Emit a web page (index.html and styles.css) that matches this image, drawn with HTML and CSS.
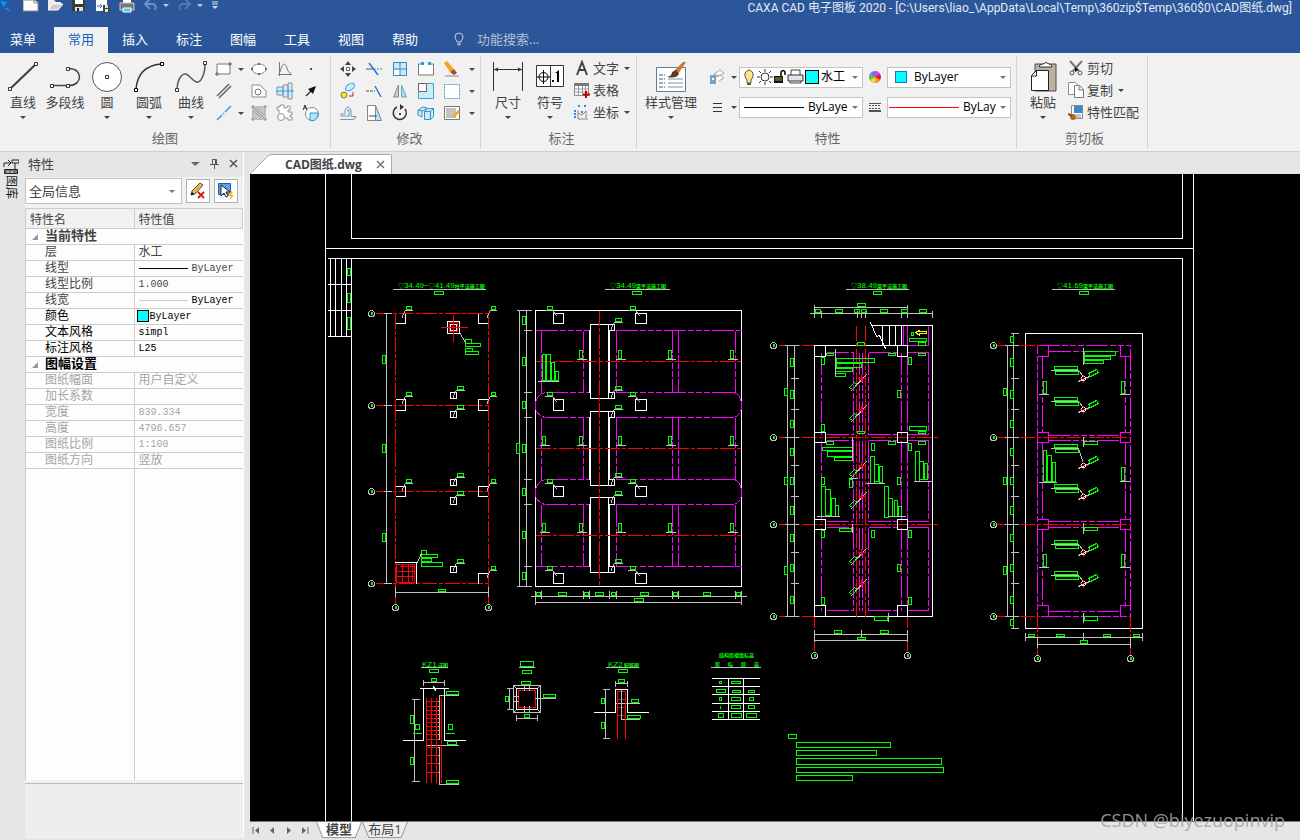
FILE: index.html
```
<!DOCTYPE html>
<html lang="zh-CN">

<head>
  <meta charset="UTF-8">
  <meta name="viewport" content="width=device-width,initial-scale=1.0">
  <title>CAXA CAD 电子图板 2020</title>
  <link rel="stylesheet" href="styles.css">
</head>

<body>
  <header class="titlebar">
    <div class="quick">
      <svg class="logo" width="12" height="13"><path d="M0 0l8 2-5 6zM5 0l6 4M2 7l7 1 2 4M0 8v3" fill="#1b8fe8" stroke="#0a5fc0"/></svg>
      <button aria-label="新建"><svg width="16" height="13"><path d="M0 0h11l4 2v9H0z" fill="#fff" stroke="#8a8a8a"/><path d="M11 0v3h4" fill="none" stroke="#8a8a8a"/></svg></button>
      <button aria-label="打开"><svg width="16" height="13"><path d="M1 0h6l2 2h5v3L12 9H1z" fill="#ececec"/><path d="M5 4h11l-5 6H1z" fill="#d0cdc8" stroke="#fff"/></svg></button>
      <button aria-label="保存"><svg width="16" height="13"><path d="M1 0h13v11H1z" fill="#3c3c3c"/><path d="M4 0h8v4H4z" fill="#fff"/><path d="M4 7h8v4H4z" fill="#ddd"/><path d="M6 8h2v3H6z" fill="#222"/></svg></button>
      <button aria-label="另存为"><svg width="16" height="13"><path d="M1 0h11v11H1z" fill="#fff"/><path d="M2 6h5m-2-2l2 2-2 2" fill="none" stroke="#2b79c8"/><path d="M8 5h7v7H8z" fill="#444"/><path d="M10 5h3v3h-3zM10 9h3v3h-3z" fill="#ddd"/></svg></button>
      <button aria-label="打印"><svg width="16" height="13"><path d="M4 0h8v4H4z" fill="#fff"/><path d="M1 3h14v7H1z" fill="#777" stroke="#ccc"/><path d="M4 8h8v4H4z" fill="#43cfee" stroke="#fff"/></svg></button>
      <button aria-label="撤销"><svg width="16" height="13"><path d="M6 0L2 4l5 5M3 4h7q4 1 2 6" fill="none" stroke="#6f8fc4" stroke-width="2"/></svg></button>
      <i class="caret light"></i>
      <button aria-label="重做"><svg width="16" height="13"><path d="M9 0l4 4-5 5M12 4H6q-5 1-3 6" fill="none" stroke="#5577b3" stroke-width="2"/></svg></button>
      <i class="caret light"></i>
      <button aria-label="自定义"><svg width="8" height="10"><path d="M1 2h6M1 4h6" stroke="#d5ddec"/><path d="M1 6h6L4 9z" fill="#d5ddec"/></svg></button>
    </div>
    <h1>CAXA CAD 电子图板 2020 - [C:\Users\liao_\AppData\Local\Temp\360zip$Temp\360$0\CAD图纸.dwg]</h1>
  </header>

  <nav class="menu">
    <button class="file">菜单</button>
    <button class="active">常用</button>
    <button>插入</button>
    <button>标注</button>
    <button>图幅</button>
    <button>工具</button>
    <button>视图</button>
    <button>帮助</button>
    <label class="search">
      <svg width="10" height="14"><path d="M3 9Q1 7 1 5a4 4 0 018 0q0 2-2 4v1H3zM3 12h4M4 13h2" fill="none" stroke="#c3cee2"/></svg>
      <input type="text" placeholder="功能搜索..." aria-label="功能搜索">
    </label>
  </nav>

  <div class="ribbon">
    <section class="group draw-group">
      <div class="tools">
        <button class="big"><svg width="32" height="32"><path d="M3 28L29 3" stroke="#3c3c44" stroke-width="2"/><path d="M1.500 26.500h3v3h-3zM27.500 1.500h3v3h-3z" fill="#fff" stroke="#333"/></svg>直线<i class="caret"></i></button>
        <button class="big"><svg width="32" height="32"><path d="M2 24.500h18c14 0 14-17 0-17h-2" fill="none" stroke="#444" stroke-width="1.500"/><path d="M1.500 23.500h3v3h-3zM17.500 23.500h3v3h-3zM17.500 6.500h3v3h-3z" fill="#fff" stroke="#333"/></svg>多段线<i class="caret blank"></i></button>
        <button class="big"><svg width="32" height="32"><circle cx="16" cy="16" r="14.500" fill="#fff" stroke="#555"/><path d="M14.500 14.500h3v3h-3z" fill="#fff" stroke="#333"/></svg>圆<i class="caret"></i></button>
        <button class="big"><svg width="32" height="32"><path d="M3 28Q5 5 28 3" fill="none" stroke="#333" stroke-width="1.500"/><path d="M1.500 27.500h3v3h-3zM27.500 1.500h3v3h-3z" fill="#fff" stroke="#000"/></svg>圆弧<i class="caret"></i></button>
        <button class="big"><svg width="32" height="32"><path d="M2 28C3 15 9 10 14 15s9 10 13 2q3-6 3-14" fill="none" stroke="#555" stroke-width="1.500"/><path d="M.5 27.500h3v3h-3zM28.500 .5h3v3h-3z" fill="#fff" stroke="#333"/></svg>曲线<i class="caret"></i></button>
        <div class="grid draw">
          <button aria-label="矩形"><svg width="18" height="18"><path d="M2 4h13v10H2z" fill="#fff" stroke="#777"/><path d="M1 13h2v2H1zM14 3h2v2h-2z" fill="#fff" stroke="#555"/></svg><i class="caret"></i></button>
          <button aria-label="椭圆"><svg width="18" height="18"><ellipse cx="9" cy="9" rx="7" ry="5" fill="#fff" stroke="#888"/><path d="M1 8h2v2H1zM15 8h2v2h-2zM8 3h2v2H8zM8 13h2v2H8z" fill="#666"/></svg></button>
          <button aria-label="公式曲线"><svg width="18" height="18"><path d="M3.500 2v14M2 14.500h14" stroke="#777"/><path d="M4 12c2-9 5-10 7-4s3 5 4 5" fill="none" stroke="#777"/></svg></button>
          <button aria-label="点"><svg width="18" height="18"><path d="M8 8h2v2H8z" fill="#555"/></svg></button>
          <button aria-label="平行线"><svg width="18" height="18"><path d="M2 14L14 2M4 16L16 4" stroke="#666" stroke-width="1.500"/></svg></button>
          <button aria-label="孔"><svg width="18" height="18"><path d="M2 15V3h8l6 6v6z" fill="#fff" stroke="#888"/><circle cx="8" cy="10" r="3" fill="none" stroke="#777"/></svg></button>
          <button aria-label="轴"><svg width="18" height="18"><path d="M1 5h6v8H1zM7 3h5v12H7zM12 1h4v16h-4z" fill="#d4e9f8" stroke="#8296a6"/><path d="M0 9h18" stroke="#2b9de0"/></svg></button>
          <button aria-label="箭头"><svg width="18" height="18"><path d="M4 14l6-6" stroke="#333" stroke-width="1.500"/><path d="M14 4l-3 8-5-5z" fill="#111"/></svg></button>
          <button aria-label="中心线"><svg width="18" height="18"><path d="M2 16l5-5m1-1l1-1m1-1l6-6" stroke="#2ba7df" stroke-width="1.500"/></svg><i class="caret"></i></button>
          <button aria-label="填充"><svg width="18" height="18"><path d="M3 1v16M15 1v16M1 3h16M1 15h16" stroke="#888"/><path d="M4 4h10v10H4z" fill="#c6c9ca"/><path d="M4 7l7 7M4 4l10 10M7 4l7 7" stroke="#999"/></svg></button>
          <button aria-label="齿轮"><svg width="18" height="18"><path d="M3 9V6H1V3h3V1h4v3h3V2h3v4h-2v2h4v3h-2v2h2v3h-4v-2h-3" fill="#fff" stroke="#8794a0"/><circle cx="5" cy="13" r="3.500" fill="#fff" stroke="#8794a0"/></svg></button>
          <button aria-label="局部放大"><svg width="18" height="18"><circle cx="10" cy="10" r="6.500" fill="#fff" stroke="#888"/><path d="M8 9h8v3q-2 5-6 5l-2-1z" fill="#b5e2f8" stroke="#2c95cf"/><path d="M1 6l2-5 2 5M2 4h3" fill="none" stroke="#333"/></svg></button>
        </div>
      </div>
      <h2>绘图</h2>
    </section>

    <section class="group edit-group">
      <div class="tools">
        <div class="grid edit">
          <button aria-label="平移"><svg width="18" height="18"><path d="M9 1l3 4H6zM9 17l3-4H6zM1 9l4-3v6zM17 9l-4-3v6z" fill="#444"/><path d="M7.500 7.500h3v3h-3z" fill="#fff" stroke="#666"/></svg></button>
          <button aria-label="裁剪"><svg width="18" height="18"><path d="M1 9h7" stroke="#555"/><path d="M4 3l9 12" stroke="#2b79c8" stroke-width="1.500"/><path d="M9 9h8" stroke="#2b9de0" stroke-dasharray="2 1"/></svg></button>
          <button aria-label="阵列"><svg width="18" height="18"><path d="M2.500 2.500h13v13h-13z" fill="#c9ebfb" stroke="#3a87b8"/><path d="M3 10h6v5H3z" fill="#fff"/><path d="M9 2v14M2 9h14" stroke="#3a87b8"/></svg></button>
          <button aria-label="打断"><svg width="18" height="18"><path d="M5 4H1.500v11h15V4H13" fill="#fff" stroke="#777"/><path d="M4 2h3v3H4zM11 2h3v3h-3z" fill="#2b9de0"/></svg></button>
          <button aria-label="删除"><svg width="18" height="18"><path d="M1 3l3-2 7 8-4 3z" fill="#f5a516"/><path d="M7 12l4-3 3 4-3 2z" fill="#a44d28"/><path d="M2 16h14" stroke="#888"/></svg></button><i class="caret"></i>
          <button aria-label="复制对象"><svg width="18" height="18"><ellipse cx="11" cy="5" rx="5" ry="3" transform="rotate(-35 11 5)" fill="#c9ebfb" stroke="#2b9de0"/><circle cx="5" cy="13" r="3" fill="#ffe800" stroke="#777"/><path d="M10 14h4v-4" fill="none" stroke="#a22"/></svg></button>
          <button aria-label="延伸"><svg width="18" height="18"><path d="M1 9h9" stroke="#555" stroke-dasharray="3 1"/><path d="M10 4l6 11" stroke="#2b79c8" stroke-width="1.500"/></svg></button>
          <button aria-label="镜像"><svg width="18" height="18"><path d="M7.500 3v12h-5z" fill="#ccc" stroke="#888"/><path d="M10.500 3v12h5z" fill="#a9dcf6" stroke="#6aa"/></svg></button>
          <button aria-label="缩放"><svg width="18" height="18"><path d="M1.500 1.500h15v15h-15z" fill="#c9ebfb" stroke="#4aa0cc"/><path d="M1.500 1.500h8v8h-8z" fill="#fff" stroke="#666"/></svg></button>
          <button aria-label="拉伸"><svg width="18" height="18"><path d="M1.500 2.500h15v14h-15z" fill="#fff" stroke="#4f9fc6" stroke-dasharray="2 1"/></svg></button><i class="caret"></i>
          <button aria-label="偏移"><svg width="18" height="18"><path d="M1 15.500h12q4 0 4-3h-5V6q-3-6-6 0v4H2v2h8V7q-1-3-2 0" fill="none" stroke="#6d9bb8"/></svg></button>
          <button aria-label="倒角"><svg width="18" height="18"><path d="M2.500 1.500h8l6 15h-14z" fill="#b7e4fa" stroke="#5b8ca8"/><path d="M2.500 1.500h8v15h-8z" fill="#fff" stroke="#888"/><path d="M4 12h8" stroke="#444"/></svg></button>
          <button aria-label="旋转"><svg width="18" height="18"><path d="M6 3a6.500 6.500 0 108 2" fill="none" stroke="#333" stroke-width="1.500"/><path d="M9 0v6l4-3z" fill="#333"/><path d="M8 9h2v2H8z" fill="#444"/></svg></button>
          <button aria-label="分解"><svg width="18" height="18"><path d="M7.500 7.500h6v8h-6zM7.500 7.500l3-3h6v8l-3 3M13.500 7.500l3-3M1 6l5-3 4 1-4 3zM1 6v5l4 2V7" fill="#c9ebfb" stroke="#3e91bf"/></svg></button>
          <button aria-label="编辑填充"><svg width="18" height="18"><path d="M1.500 2.500h15v13h-15z" fill="#fff" stroke="#777"/><path d="M3 4h10v10H3z" fill="#c2c2c2"/><path d="M9 13l6-7 2 2-6 6z" fill="#f5a516"/></svg></button><i class="caret"></i>
        </div>
      </div>
      <h2>修改</h2>
    </section>

    <section class="group note-group">
      <div class="tools">
        <button class="big"><svg width="32" height="32"><path d="M1.500 1v29M30.500 1v29M2 8.500h28" stroke="#2f3338"/><path d="M2 8.500l4-2v4zM30 8.500l-4-2v4z" fill="#333"/></svg>尺寸<i class="caret"></i></button>
        <button class="big"><svg width="32" height="32"><path d="M2.500 4.500h27v21h-27zM16.500 4v22" fill="#fff" stroke="#333"/><circle cx="9.500" cy="16" r="4.500" fill="none" stroke="#000"/><path d="M3 16h13M9.500 9v14" stroke="#000"/><path d="M18 19h2v2h-2zM21 12l4-3v12h-2v-9z"/></svg>符号<i class="caret"></i></button>
        <div class="rows">
          <button><svg width="16" height="16"><path d="M3 15L8 2l5 13M5 10h7" fill="none" stroke="#444" stroke-width="2"/></svg>文字<i class="caret"></i></button>
          <button><svg width="16" height="16"><path d="M.5 1.500h14v12H.5z" fill="#fff" stroke="#888"/><path d="M0 1h15v3H0z" fill="#777"/><path d="M1 7h13M1 10h13M4.500 4v9M8.500 4v9M11.500 4v9" stroke="#999"/><path d="M12 9v7M9 12.500h7" stroke="#c00000" stroke-width="2"/></svg>表格</button>
          <button><svg width="16" height="16"><path d="M4 6v9h10M4 9l4 2 4-4v7" fill="none" stroke="#888"/><path d="M1 6v8M5 1v3M11 1v3M8 7v2" stroke="#3a87d0" stroke-dasharray="2 1" stroke-width="2"/></svg>坐标<i class="caret"></i></button>
        </div>
      </div>
      <h2>标注</h2>
    </section>

    <section class="group prop-group">
      <div class="tools">
        <button class="big wide"><svg width="32" height="32"><path d="M1.500 6.500h29v24h-29z" fill="#fff" stroke="#5b7f9b"/><path d="M4 14h6M4 18h6M4 22h6M4 26h6" stroke="#555" stroke-dasharray="4 1"/><path d="M13 18h15M13 22h15M13 26h15" stroke="#6f95b5"/><path d="M28 1h3l-8 12-4-3z" fill="#c9782e"/><path d="M21 9l3 4q-3 5-12 3 5-1 5-5z" fill="#5f3a24"/></svg>样式管理<i class="caret"></i></button>
        <div class="layers">
          <button aria-label="图层"><svg width="16" height="16"><path d="M5 5l6-4 4 3-5 3zM6 9l5-3 4 3-5 3" fill="#fff" stroke="#9aa3aa"/><path d="M1 6h6v9H1z" fill="#7da0bd"/><path d="M3 9h2v2H3z" fill="#fff"/></svg><i class="caret"></i></button>
          <div class="combo">
            <svg width="14" height="20"><path d="M4 13Q1 10 2 6q4-6 8 0 1 4-2 7v3H4z" fill="#ffe58a" stroke="#555"/><path d="M4 16h4v2H4z" fill="#555"/></svg>
            <svg width="16" height="20"><circle cx="8" cy="10" r="4" fill="#fff" stroke="#333"/><path d="M8 2v3M8 15v3M0 10h3M13 10h3M2 4l2 2M12 14l2 2M2 16l2-2M12 6l2-2" stroke="#333"/></svg>
            <svg width="14" height="20"><path d="M8 9V5q2-3 4 0v3" fill="none" stroke="#000" stroke-width="1.500"/><path d="M1 9h9v7H1z" fill="#111"/><path d="M2 11h7M2 13h7" stroke="#bba02c"/></svg>
            <svg width="18" height="20"><path d="M4 8V3h9v5M3 12v4h11v-4" fill="#fff" stroke="#444"/><path d="M1 8h15v6H1z" fill="#dce4ee" stroke="#333"/></svg>
            <i class="swatch"></i>
            <select aria-label="图层选择"><option>水工</option></select><i class="caret soft"></i>
          </div>
          <button aria-label="颜色"><svg width="14" height="14"><circle cx="7" cy="7" r="6" fill="#7a6cf0"/><path d="M7 7V1a6 6 0 015 3z" fill="#c04df0"/><path d="M7 7l5-3a6 6 0 010 6z" fill="#f01818"/><path d="M7 7l5 3a6 6 0 01-5 3z" fill="#ff9a1c"/><path d="M7 7v6a6 6 0 01-5-3z" fill="#ffe11c"/><path d="M7 7l-5 3a6 6 0 010-6z" fill="#4ccf3f"/></svg></button>
          <div class="combo color">
            <i class="swatch blue"></i>
            <select aria-label="颜色选择"><option>ByLayer</option></select><i class="caret soft"></i>
          </div>
          <button aria-label="线型"><svg width="16" height="16"><path d="M4 4h9M4 8h9M4 12h9" stroke="#333" shape-rendering="crispEdges"/></svg><i class="caret"></i></button>
          <div class="combo">
            <i class="stroke"></i>
            <select aria-label="线型选择"><option>ByLayer</option></select><i class="caret soft"></i>
          </div>
          <button aria-label="线宽"><svg width="14" height="14" shape-rendering="crispEdges"><path d="M1 3h12" stroke="#555"/><path d="M1 5h12M1 8h12" stroke="#555" stroke-dasharray="2 1"/><path d="M1 11h12" stroke="#555" stroke-width="2"/></svg></button>
          <div class="combo">
            <i class="stroke red-line"></i>
            <select aria-label="线宽选择"><option>ByLayer</option></select><i class="caret soft"></i>
          </div>
        </div>
      </div>
      <h2>特性</h2>
    </section>

    <section class="group clip-group">
      <div class="tools">
        <button class="big"><svg width="32" height="32"><path d="M8 3h21v27H8z" fill="#beb1a0" stroke="#4a4a4a"/><path d="M12 6q0-3 4-3 3-3 6 0 3 0 3 3z" fill="#fff" stroke="#333"/><path d="M9.500 9.500h12v20h-17v-15z" fill="#fff" stroke="#222"/><path d="M9.500 9v6h-5" fill="none" stroke="#222"/></svg>粘贴<i class="caret"></i></button>
        <div class="rows">
          <button><svg width="16" height="16"><path d="M2 1l9 10M14 1L5 11" stroke="#777" stroke-width="2"/><path d="M7 7l3 3-3 2z"/><circle cx="4" cy="13" r="2" fill="none" stroke="#555"/><circle cx="12" cy="13" r="2" fill="none" stroke="#555"/></svg>剪切</button>
          <button><svg width="16" height="16"><path d="M.5 .5h7l2 2v10h-9z" fill="#fff" stroke="#8a8f95"/><path d="M6.500 3.500h5l4 4v8h-9zM11 4v4h4" fill="#fff" stroke="#777"/></svg>复制<i class="caret"></i></button>
          <button><svg width="16" height="16"><path d="M3.500 1.500h11v13h-11z" fill="#fff" stroke="#889"/><path d="M6 2h8v7H6z" fill="#3f86c8"/><path d="M8 11h5M8 13h5" stroke="#889"/><circle cx="5" cy="13" r="3" fill="#b5651d"/><path d="M0 10l4 2" stroke="#8a4b12" stroke-width="2"/></svg>特性匹配</button>
        </div>
      </div>
      <h2>剪切板</h2>
    </section>
  </div>

  <main>
    <aside class="dock">
      <svg width="16" height="16"><path d="M1 8V4h6M5 1l3 3-3 3M9 1h7v3H9zM12 4v6" fill="none" stroke="#222"/><path d="M1.500 10.500h13v4h-13z" fill="#777" stroke="#222"/><path d="M4 13h2m2 0h2" stroke="#fff"/></svg>
      <button>图库</button>
    </aside>

    <aside class="panel">
      <div class="panel-title">
        <span>特性</span>
        <button aria-label="菜单"><svg width="11" height="11"><path d="M1 4h9L5 8z" fill="#666"/></svg></button>
        <button aria-label="固定"><svg width="11" height="11"><path d="M3.500 6V1.500h4V6M1 6.500h9M5.500 7v4M6.500 2v4" fill="none" stroke="#555"/></svg></button>
        <button aria-label="关闭"><svg width="11" height="11"><path d="M2 2l7 7M9 2L2 9" stroke="#555" stroke-width="1.500"/></svg></button>
      </div>
      <div class="panel-pick">
        <div class="combo">
          <select aria-label="对象"><option>全局信息</option></select><i class="caret soft"></i>
        </div>
        <button aria-label="清除选择"><svg width="18" height="18"><path d="M2 13l1-4 8-8 3 2-8 9z" fill="#f1b845" stroke="#444"/><path d="M2 13l1-3 2 2z"/><path d="M9 10l6 6M15 10l-6 6" stroke="#d0221c" stroke-width="2"/></svg></button>
        <button aria-label="快速选择"><svg width="18" height="18"><path d="M1.500 1.500h12v11h-12z" fill="#59a2e8" stroke="#1b62ac"/><path d="M4 3v11l3-3 2 4 2-1-2-4h4z" fill="#fff" stroke="#222"/><path d="M14 9l-3 5h3l-1 4 4-5h-3l2-3z" fill="#ffb400"/></svg></button>
      </div>
      <div class="prop-view">
        <table class="props">
          <thead>
            <tr><th scope="col">特性名</th><th scope="col">特性值</th></tr>
          </thead>
          <tbody>
            <tr class="cat"><th colspan="2">当前特性</th></tr>
            <tr><th>层</th><td class="cn">水工</td></tr>
            <tr><th>线型</th><td><i class="line"></i>ByLayer</td></tr>
            <tr><th>线型比例</th><td>1.000</td></tr>
            <tr><th>线宽</th><td class="on"><i class="line thin"></i>ByLayer</td></tr>
          </tbody>
          <tbody class="on">
            <tr><th>颜色</th><td class="has-swatch"><i class="swatch small"></i>ByLayer</td></tr>
            <tr><th>文本风格</th><td>simpl</td></tr>
            <tr><th>标注风格</th><td>L25</td></tr>
            <tr class="cat"><th colspan="2">图幅设置</th></tr>
          </tbody>
          <tbody class="off">
            <tr><th>图纸幅面</th><td class="cn">用户自定义</td></tr>
            <tr><th>加长系数</th><td></td></tr>
            <tr><th>宽度</th><td>839.334</td></tr>
            <tr><th>高度</th><td>4796.657</td></tr>
            <tr><th>图纸比例</th><td>1:100</td></tr>
            <tr><th>图纸方向</th><td class="cn">竖放</td></tr>
          </tbody>
        </table>
        <div class="prop-rest"><i></i></div>
      </div>
      <div class="prop-help"></div>
    </aside>

    <section class="document">
      <div class="doc-tabs">
        <svg width="21" height="20"><path d="M0 20L19 1h2v19z" fill="#fff"/><path d="M0 20L19 1h2" fill="none" stroke="#aaa"/></svg>
        <div class="doc-tab">CAD图纸.dwg
          <button aria-label="关闭图纸"><svg width="9" height="9"><path d="M1 1l7 7M8 1L1 8" stroke="#777" stroke-width="1.500"/></svg></button>
        </div>
      </div>
      <svg class="sheet" role="img" aria-label="CAD图纸">
        <g id="drawing" transform="translate(-250 -174)">
          <g class="label">
            <text x="398" y="288"><tspan class="tri">▽</tspan>34.49~<tspan class="tri">▽</tspan>41.49<tspan class="han">柱平法施工图</tspan></text>
            <text x="610" y="288"><tspan class="tri">▽</tspan>34.49<tspan class="han">梁平法施工图</tspan></text>
            <text x="851" y="288"><tspan class="tri">▽</tspan>38.49<tspan class="han">梁平法施工图</tspan></text>
            <text x="1057" y="288"><tspan class="tri">▽</tspan>41.69<tspan class="han">梁平法施工图</tspan></text>
            <text x="422" y="667">KZ1<tspan class="han"> 详图</tspan></text>
            <text x="608" y="667">KZ2<tspan class="han"> 配筋图</tspan></text>
            <text class="han" x="719" y="657">结构层楼面标高</text>
            <text class="han" x="715" y="666">层</text><text class="han" x="728" y="666">标</text>
            <text class="han" x="741" y="666">层</text><text class="han" x="754" y="666">高</text>
          </g>
        </g>
      </svg>
      <div class="layout-tabs">
        <button aria-label="首个"><svg width="9" height="9"><path d="M1 1v7" stroke="#666"/><path d="M7 1v7L3 4.500z" fill="#666"/></svg></button>
        <button aria-label="上一个"><svg width="9" height="9"><path d="M6 1v7L2 4.500z" fill="#666"/></svg></button>
        <button aria-label="下一个"><svg width="9" height="9"><path d="M3 1v7l4-3.500z" fill="#666"/></svg></button>
        <button aria-label="末个"><svg width="9" height="9"><path d="M8 1v7" stroke="#666"/><path d="M2 1v7l4-3.500z" fill="#666"/></svg></button>
        <button class="layout current"><span>模型</span></button>
        <button class="layout"><span>布局1</span></button>
      </div>
    </section>
  </main>
  <div class="watermark">CSDN @biyezuopinvip</div>

  <script src="drawing.js"></script>
</body>

</html>
```

FILE: styles.css
```
* {
  box-sizing: border-box;
}

body {
  margin: 0;
  height: 100vh;
  overflow: hidden;
  display: flex;
  flex-direction: column;
  background: #e6e6e6;
  color: #444;
  font: 13px/16px "Open Sans", "Noto Sans CJK SC", sans-serif;
}

button,
select,
input {
  font: inherit;
  color: inherit;
  padding: 0;
  margin: 0;
  border: 0;
  background: none;
}

select {
  appearance: none;
  flex: 1;
  min-width: 0;
  height: 18px;
  color: #000;
}

h1,
h2 {
  margin: 0;
  font-weight: normal;
}

svg {
  display: block;
  flex: none;
}

/* drop-down arrow */
.caret {
  flex: none;
  width: 0;
  height: 0;
  border: 3px solid transparent;
  border-top-color: #444;
  border-bottom: 0;
}

.caret.light {
  border-top-color: #c3cee2;
}

.caret.soft {
  border-top-color: #777;
}

.caret.blank {
  visibility: hidden;
}

/* title bar */
.titlebar {
  display: flex;
  justify-content: space-between;
  height: 27px;
  padding-right: 8px;
  background: #2b579a;
  color: #e3eaf5;
}

.titlebar h1 {
  font: 12px/16px Roboto, "Noto Sans CJK SC", sans-serif;
  white-space: nowrap;
}

.quick {
  display: flex;
  align-items: flex-start;
  gap: 8px;
}

.quick .logo {
  margin-right: 3px;
}

.quick .caret {
  margin: 4px 0 0 -4px;
}

.menu {
  display: flex;
  height: 26px;
  background: #2b579a;
  color: #fff;
}

.menu button {
  width: 54px;
  padding-bottom: 2px;
}

.menu .file {
  width: 46px;
  margin-right: 8px;
}

.menu .active {
  background: #f1f1f1;
  color: #1a5dbe;
}

.search {
  display: flex;
  align-items: center;
  gap: 13px;
  margin-left: 22px;
  padding-bottom: 2px;
}

.search input {
  width: 140px;
}

.search input::placeholder {
  color: #b4c0d6;
  opacity: 1;
}

/* ribbon */
.ribbon {
  display: flex;
  height: 99px;
  padding-top: 3px;
  background: #f1f1f1;
  border-bottom: 1px solid #cfcfcf;
}

.group {
  height: 92px;
  padding-left: 2px;
  border-right: 1px solid #d4d4d4;
  display: flex;
  flex-direction: column;
}

.group h2 {
  font-size: 13px;
  text-align: center;
  color: #666;
}

.tools {
  display: flex;
  height: 74px;
}

.big {
  width: 42px;
  height: 66px;
  padding-top: 5px;
  display: flex;
  flex-direction: column;
  align-items: center;
  white-space: nowrap;
}

.big svg {
  margin-bottom: 1px;
}

.big .caret {
  margin-top: 6px;
}

.big.wide {
  width: 64px;
}

.grid {
  display: grid;
  grid-auto-rows: 22px;
  align-items: center;
  padding-top: 2px;
}

.grid button {
  display: flex;
  align-items: center;
  gap: 5px;
}

.draw {
  grid-template-columns: 35px repeat(3, 26px);
  margin-left: 3px;
}

.draw-group {
  padding-right: 2px;
}

.edit {
  grid-template-columns: repeat(5, 26px) 11px;
}

.edit-group {
  padding-left: 8px;
}

.note-group {
  padding-left: 6px;
}

.rows {
  display: grid;
  grid-auto-rows: 22px;
  padding-top: 1px;
  width: 65px;
  padding-left: 3px;
}

.rows button {
  display: flex;
  align-items: center;
  gap: 3px;
  white-space: nowrap;
}

.rows .caret {
  margin-left: 2px;
}

.clip-group {
  padding-left: 5px;
}

.clip-group .rows {
  width: 83px;
  padding-left: 4px;
}

.layers {
  display: grid;
  grid-template-columns: 32px 124px 24px 124px;
  grid-auto-rows: 30px;
  align-items: center;
  padding: 6px 5px 0 4px;
}

.layers button {
  display: flex;
  align-items: center;
  justify-content: center;
  gap: 6px;
}

.combo {
  display: flex;
  align-items: center;
  height: 21px;
  padding: 0 4px 0 3px;
  background: #fff;
  border: 1px solid #c3c3c3;
  font-size: 12px;
}

.combo .caret {
  margin-left: 4px;
}

.combo.color {
  padding-left: 7px;
}

.swatch {
  flex: none;
  width: 14px;
  height: 14px;
  margin-right: 2px;
  border: 1px solid #000;
  background: #0ff;
}

.swatch.blue {
  width: 12px;
  height: 12px;
  margin-right: 7px;
  border-color: #1874cd;
}

.stroke {
  flex: none;
  width: 60px;
  height: 1px;
  margin: 0 4px 0 1px;
  background: #000;
}

.stroke.red-line {
  width: 70px;
  margin: 0 4px 0 -2px;
  background: #f00;
}

/* work area */
main {
  flex: 1;
  display: flex;
  min-height: 0;
  padding-bottom: 2px;
}

.dock {
  width: 25px;
  padding: 7px 0 0 3px;
}

.dock button {
  writing-mode: vertical-rl;
  text-orientation: sideways;
  font-size: 12px;
  color: #222;
  line-height: 16px;
}

.panel {
  width: 219px;
  display: flex;
  flex-direction: column;
  background: #f1f1f1;
  border-right: 1px solid #fff;
}

.panel-title {
  display: flex;
  align-items: center;
  gap: 8px;
  height: 25px;
  padding: 0 4px 2px 3px;
  background: #e6e6e6;
}

.panel-title span {
  flex: 1;
}

.panel-pick {
  display: flex;
  align-items: center;
  gap: 4px;
  height: 28px;
  padding-right: 5px;
}

.panel-pick .combo {
  flex: 1;
  height: 26px;
  padding-right: 6px;
  font-size: 13px;
}

.panel-pick .combo select {
  color: #444;
}

.panel-pick button {
  width: 24px;
  height: 24px;
  padding: 2px;
  background: #fff;
  border: 1px solid #b0b0b0;
}

.prop-view {
  flex: 1;
  display: flex;
  flex-direction: column;
  margin-top: 3px;
  background: #fdfdfd;
  border-left: 1px solid #ccc;
  border-top: 1px solid #ccc;
}

.props {
  width: 100%;
  border-spacing: 0;
  table-layout: fixed;
  font: 12px/14px "Liberation Mono", "Noto Sans CJK SC", monospace;
}

.props th,
.props td {
  height: 16px;
  padding: 1px 0 0 4px;
  text-align: left;
  font-weight: normal;
  white-space: nowrap;
  border-bottom: 1px solid #ccc;
}

.props th {
  padding-left: 19px;
  border-right: 1px solid #ccc;
}

.props td {
  font-size: 10px;
}

.props .cn {
  font-size: 12px;
}

.props thead th {
  height: 20px;
  padding: 4px 0 0 4px;
  background: #f1f1f1;
}

.props .cat th {
  position: relative;
  font-size: 13px;
  font-weight: bold;
  border-right: 0;
}

.props .cat th::before {
  content: "";
  position: absolute;
  left: 6px;
  top: 5px;
  border-left: 6px solid transparent;
  border-bottom: 6px solid #999;
}

.props .on,
.props .on td {
  color: #000;
}

.props .off {
  color: #a5a5a5;
}

.line {
  display: inline-block;
  width: 49px;
  height: 1px;
  margin-right: 4px;
  vertical-align: middle;
  background: #000;
}

.line.thin {
  background: #ccc;
}

.props .has-swatch {
  padding-left: 2px;
}

.swatch.small {
  display: inline-block;
  width: 12px;
  height: 12px;
  margin-right: 1px;
  vertical-align: middle;
}

.prop-rest {
  flex: 1;
  display: grid;
  grid-template-columns: 1fr 1fr;
}

.prop-rest i {
  border-right: 1px solid #ccc;
}

.prop-help {
  height: 54px;
  margin: 3px 0 1px;
  border-top: 1px solid #bbb;
  background: #eee;
}

.document {
  flex: 1;
  min-width: 0;
  margin-left: 6px;
  display: flex;
  flex-direction: column;
}

.doc-tabs {
  display: flex;
  align-items: flex-end;
  height: 22px;
}

.doc-tab {
  display: flex;
  align-items: center;
  gap: 14px;
  height: 20px;
  padding: 0 6px 0 14px;
  background: #fff;
  border-top: 1px solid #aaa;
  border-right: 1px solid #aaa;
  border-radius: 0 2px 0 0;
  font-size: 12px;
  font-weight: bold;
}

.sheet {
  flex: 1;
  width: 100%;
  min-height: 0;
  background: #000;
}

.layout-tabs {
  display: flex;
  height: 17px;
  padding-left: 2px;
  border-top: 1px solid #777;
}

.layout-tabs button {
  width: 16px;
}

/* outer shape is the border, the span on top is the tab face */
.layout-tabs .layout {
  width: 46px;
  padding: 0 1px 1px;
  background: #999;
  clip-path: polygon(0 0, 100% 0, 86% 100%, 14% 100%);
}

.layout span {
  display: block;
  height: 15px;
  line-height: 14px;
  background: #eee;
  clip-path: polygon(0 0, 100% 0, 86% 100%, 14% 100%);
}

.layout-tabs .current {
  font-weight: bold;
}

.current span {
  background: #fff;
}

.watermark {
  position: absolute;
  right: 15px;
  bottom: 9px;
  font-size: 18px;
  line-height: 22px;
  color: rgba(165, 165, 165, 0.9);
}

/* drawing */
#drawing path {
  fill: none;
  stroke-linecap: square;
  shape-rendering: crispEdges;
}

#drawing .axis {
  stroke-dasharray: 15 2 4 2;
  stroke-linecap: butt;
}

#drawing .hidden {
  stroke-dasharray: 22 2 6 2 6 2 6 2;
  stroke-linecap: butt;
}

.white {
  stroke: #fff;
}

.gray {
  stroke: #c0c0c0;
}

.green {
  stroke: #0f0;
}

.red {
  stroke: #f00;
}

.magenta {
  stroke: #f0f;
}

.yellow {
  stroke: #ff0;
}

.label {
  fill: #0f0;
  font: 8px "Liberation Sans", "Noto Sans CJK SC", sans-serif;
}

.label .tri {
  font-size: 6px;
}

.label .han {
  font-size: 5px;
  font-weight: bold;
}
```

FILE: drawing.js
```
var drawing = document.getElementById('drawing');

function path(cls, d) {
  var p = document.createElementNS('http://www.w3.org/2000/svg', 'path');
  p.setAttribute('class', cls);
  p.setAttribute('d', d);
  // stroke centres fall in the middle of a pixel
  p.setAttribute('transform', 'translate(.5 .5)');
  drawing.appendChild(p);
}

function each(list, fn) {
  return list.trim().split(/\s*,\s*/).map(function (item) {
    return fn.apply(null, item.split(/\s+/).map(Number));
  }).join('');
}

// x y w h
function boxes(cls, list) {
  path(cls, each(list, function (x, y, w, h) {
    return 'M' + x + ' ' + y + 'h' + w + 'v' + h + 'h' + -w + 'z';
  }));
}

// x1 y1 x2 y2
function lines(cls, list) {
  path(cls, each(list, function (a, b, c, d) {
    return 'M' + a + ' ' + b + 'L' + c + ' ' + d;
  }));
}

// y x1 x2
function hor(cls, list) {
  path(cls, each(list, function (y, a, b) {
    return 'M' + a + ' ' + y + 'H' + b;
  }));
}

// x y1 y2
function ver(cls, list) {
  path(cls, each(list, function (x, a, b) {
    return 'M' + x + ' ' + a + 'V' + b;
  }));
}

// axis number bubbles
function bubbles(list) {
  path('gray', each(list, function (x, y) {
    return 'M' + (x - 3) + ' ' + y + 'a3 3 0 0 1 6 0a3 3 0 0 1 -6 0';
  }));
  boxes('green', each(list, function (x, y) {
    return x + ' ' + (y - 1) + ' 1 2,';
  }).slice(0, -1));
}

// callout with its leader going down left
function callouts(list) {
  path('gray', each(list, function (x, y, w) {
    return 'M' + (x + w + 1) + ' ' + (y + 4) + 'H' + (x - 1) + 'l-3 5v2';
  }));
  path('green', each(list, function (x, y, w) {
    return 'M' + x + ' ' + y + 'h' + w + 'v3h' + -w + 'z';
  }));
}

// sheet frame
ver('white', '325 174 821, 351 174 238, 1182 174 238, 1193 174 821, 351 258 821, 1182 258 821');
hor('white', '238 351 1182, 248 325 1193, 258 328 1182, 284 328 351, 310 328 351, 336 328 351');
ver('white', '330 258 336, 335 258 336, 341 258 336, 346 258 336');
boxes('green', '347 268 3 7, 347 293 3 9, 347 317 3 12');

// title underlines
hor('gray', '289 393 485, 289 605 669, 289 846 908, 289 1052 1114');
boxes('green', '434 291 9 3, 632 291 9 3, 873 291 8 3, 1079 291 9 3');

// columns plan
hor('red axis', '313 375 488, 405 375 488, 491 375 488, 583 375 488');
ver('red axis', '395 313 603, 488 313 603');
bubbles('371 313, 371 405, 371 491, 371 583, 395 607, 488 607');
ver('gray', '386 313 583, 395 587 596, 488 587 596');
hor('gray', '313 384 391, 405 384 391, 491 384 391, 583 384 391, 592 395 488');
boxes('green', '382 355 3 8, 382 444 3 8, 382 533 3 8, 438 589 7 2');
boxes('white', '450 392 6 6, 450 411 6 6, 450 479 6 6, 450 497 6 7, 450 566 6 6, 447 321 12 12, 450 324 6 6');
path('white', 'M396 323H405V314M478 314V323H487M396 399H405V410H396M487 399H478V410H487M396 486H405V496H396M487 486H478V496H487M478 583V573H487');
callouts('406 306 5, 491 306 4, 406 392 5, 491 392 4, 406 479 5, 491 479 4, 491 566 4, 457 386 6, 457 405 6, 457 473 6, 457 491 6, 457 559 6');
boxes('red', '449 322 8 9');
lines('red', '441 327 467 327, 453 315 453 341');
boxes('green', '465 339 6 4, 465 343 15 3, 465 348 7 3, 465 351 13 3, 421 550 5 4, 421 554 16 3, 421 558 10 3, 421 562 21 4');
lines('gray', '459 332 465 342, 417 562 421 553');
lines('white', '395 562 416 562, 416 562 416 583');
boxes('red', '396 564 18 18');
hor('red', '571 397 414, 576 397 414, 566 400 414');
ver('red', '402 564 583, 408 564 583, 412 566 580');

// beams plan 34.49
boxes('white', '535 310 206 276, 590 324 18 74, 590 411 18 74, 590 497 18 75, 608 324 6 6, 608 392 6 6, 608 411 6 6, 608 479 6 6, 608 497 6 7, 608 566 6 6');
boxes('white', '553 313 10 10, 635 313 11 10, 553 399 10 11, 635 399 11 11, 553 486 10 10, 635 486 11 10, 553 573 10 10, 635 573 11 10');
ver('white', '589 330 392, 609 330 392, 589 417 479, 609 417 479, 589 504 566, 609 504 566');
hor('magenta hidden', '330 535 588, 330 615 741, 392 545 588, 392 615 733, 417 545 588, 417 615 733, 479 545 588, 479 615 733, 504 545 588, 504 615 733, 566 535 588, 566 615 741');
path('magenta hidden', 'M545 392Q535 394 535 405Q535 415 545 417M733 392Q741 394 741 405Q741 415 733 417M545 479Q535 481 535 492Q535 502 545 504M733 479Q741 481 741 492Q741 502 733 504');
[541, 583, 616, 672, 678, 735].forEach(function (x) {
  ver('magenta hidden', x + ' 330 392,' + x + ' 417 479,' + x + ' 504 566');
});
hor('red axis', '361 535 741, 448 535 741, 535 535 741');
ver('red axis', '599 310 586');
ver('gray', '519 310 586, 526 310 586');
hor('gray', '310 517 531, 330 524 531, 392 524 531, 417 524 531, 479 524 531, 504 524 531, 566 524 531, 586 517 531');
boxes('green', '522 316 3 8, 522 357 3 8, 522 401 3 7, 522 444 3 8, 522 488 3 7, 522 531 3 7, 522 572 3 7, 516 443 3 10');
callouts('615 318 6, 615 386 6, 615 405 6, 615 473 6, 615 491 6, 615 559 6');
[306, 392, 479, 566].forEach(function (y) {
  boxes('green', '547 ' + y + ' 5 3, 630 ' + y + ' 5 3');
  path('gray', 'M545 ' + (y + 4) + 'h7l4 5M628 ' + (y + 4) + 'h7l4 5');
});
[350, 436, 523].forEach(function (y) {
  [542, 579, 618, 668, 730].forEach(function (x) {
    if (y == 350 && x == 542) return;
    boxes('green', x + ' ' + y + ' 3 8');
    hor('gray', (y + 9) + ' ' + (x - 2) + ' ' + (x + 7));
  });
});
boxes('green', '542 354 3 26, 546 354 4 26, 551 362 3 18, 555 371 3 9');
hor('gray', '381 538 558, 596 531 746, 602 535 741');
ver('gray', '535 591 604, 541 591 598, 583 591 598, 589 591 598, 609 591 598, 616 591 598, 672 591 598, 678 591 598, 735 591 598, 741 591 604');
boxes('green', '536 592 4 3, 558 592 8 3, 584 592 4 3, 595 592 8 3, 611 592 4 3, 640 592 8 3, 673 592 4 3, 703 592 7 3, 736 592 4 3, 634 598 9 3');

// beams plan 38.49
path('white', 'M872 325H932V616H814V345H901V325M882 325V345M889 325V345M895 325V345M870 322L876 336L879 335L885 348');
[[352, 434], [440, 521], [527, 610]].forEach(function (s) {
  [821, 853, 859, 862, 868, 901, 907, 928].forEach(function (x) {
    ver('magenta hidden', x + ' ' + s[0] + ' ' + s[1]);
  });
  s.forEach(function (y) {
    hor('magenta hidden', y + ' 826 853,' + y + ' 868 897,' + y + ' 907 928');
  });
});
ver('magenta hidden', '903 325 345, 907 325 345, 928 325 345');
hor('magenta hidden', '345 907 928');
ver('red axis', '856 325 616, 865 325 616, 814 612 651, 907 612 651');
hor('red axis', '345 778 820, 437 778 937, 524 778 937, 616 778 820');
boxes('white', '814 345 11 11, 897 345 10 11, 814 432 11 10, 897 432 10 10, 814 519 11 10, 897 519 10 10, 814 605 11 11, 897 605 10 11');
bubbles('773 345, 773 437, 773 524, 773 616, 814 655, 907 655');
ver('gray', '787 345 616, 794 345 616, 814 305 317, 821 311 317, 857 311 317, 861 311 317, 865 311 317, 901 311 317, 907 305 317, 932 311 317, 814 630 641, 907 630 641, 861 630 637');
hor('gray', '307 814 907, 313 810 932, 345 785 798, 437 785 798, 524 785 798, 616 785 798, 378 791 798, 409 791 798, 465 791 798, 496 791 798, 552 791 798, 583 791 798, 634 814 907, 640 814 907');
boxes('green', '857 303 8 3, 815 309 5 3, 835 309 7 3, 854 309 5 3, 861 309 5 3, 880 309 7 3, 901 309 6 3, 919 309 7 3, 834 630 7 3, 880 630 8 3, 857 637 8 2');
boxes('green', '790 358 3 8, 790 390 3 8, 790 420 3 7, 790 448 3 7, 790 477 3 7, 790 506 3 8, 790 534 3 7, 790 564 3 7, 790 596 3 7, 784 388 3 7, 784 477 3 7, 784 566 3 8');
boxes('green', '821 357 3 7, 821 424 3 7, 821 477 3 7, 821 530 3 7, 821 597 3 7, 908 357 3 7, 908 443 3 7, 908 530 3 7, 908 597 3 7, 897 390 3 7, 897 477 3 7, 897 564 3 7, 871 443 3 7, 871 530 3 7');
boxes('green', '826 353 7 2, 888 353 7 2, 918 353 7 2, 826 441 7 3, 888 441 7 3, 918 441 7 3, 857 342 7 3, 857 431 7 2, 909 338 17 3, 918 342 7 3, 911 332 2 3, 909 426 17 4, 918 431 7 2');
boxes('green', '836 358 38 4, 836 363 25 4, 835 368 17 3, 835 373 10 3, 822 447 30 3, 827 451 25 5, 834 457 18 3');
boxes('green', '821 486 4 30, 825 489 5 26, 831 498 4 18, 835 505 3 11, 870 456 4 27, 874 464 4 17, 879 466 3 16, 884 486 4 31, 888 498 4 18, 894 500 3 16, 898 506 3 10, 915 451 4 30, 919 461 4 18, 924 463 3 16');
boxes('green', '849 479 3 8, 839 528 12 3, 874 616 13 4');
hor('gray', '516 817 839, 483 866 884, 516 888 905, 481 914 932, 478 849 857');
ver('gray', '835 349 375, 852 437 460, 852 524 532, 888 613 621');
path('yellow', 'M915 332l4-2v1h7v2h-7v2z');
[378, 409, 465, 496, 552, 583].forEach(function (y) {
  path('gray', 'M851 ' + (y + 12) + 'L866 ' + (y - 4));
  path('green', 'M849 ' + (y + 9) + 'l5-5l3 2l-5 5z');
  path('red', 'M858 ' + y + 'h6M861 ' + (y - 3) + 'v6');
});

// beams plan 41.69
boxes('white', '1025 333 117 295');
boxes('magenta hidden', '1037 345 93 271');
[[356, 432], [442, 519], [529, 605]].forEach(function (s) {
  ver('magenta hidden', '1042 ' + s[0] + ' ' + s[1] + ',1125 ' + s[0] + ' ' + s[1]);
  hor('magenta', s[0] + ' 1037 1048,' + s[0] + ' 1120 1130,' + s[1] + ' 1037 1048,' + s[1] + ' 1120 1130');
});
ver('magenta', '1048 345 356, 1120 345 356, 1048 432 442, 1120 432 442, 1048 519 529, 1120 519 529, 1048 605 616, 1120 605 616');
hor('magenta hidden', '351 1048 1120, 435 1048 1120, 440 1048 1120, 521 1048 1120, 527 1048 1120, 611 1048 1120');
hor('red axis', '345 996 1039, 437 996 1130, 524 996 1130, 616 996 1039');
ver('red axis', '1037 616 654, 1130 616 654');
bubbles('993 345, 993 437, 993 524, 993 616, 1037 658, 1130 658');
ver('gray', '1007 345 616, 1013 333 628, 1025 633 640, 1142 633 640, 1083 633 640, 1037 637 647, 1130 637 647, 1083 348 364, 1083 437 446, 1083 523 533, 1083 613 622');
hor('gray', '333 1011 1018, 628 1011 1018, 345 1005 1018, 437 1005 1018, 524 1005 1018, 616 1005 1018, 378 1011 1018, 409 1011 1018, 465 1011 1018, 496 1011 1018, 552 1011 1018, 583 1011 1018, 637 1025 1142, 644 1037 1130');
hor('gray', '394 1039 1048, 394 1120 1129, 481 1120 1129, 567 1039 1048, 567 1120 1129, 482 1039 1056');
boxes('green', '1010 336 3 6, 1010 358 3 8, 1010 390 3 8, 1010 420 3 7, 1010 448 3 7, 1010 477 3 7, 1010 506 3 8, 1010 534 3 7, 1010 564 3 7, 1010 596 3 7, 1010 619 3 6, 1003 388 3 7, 1003 477 3 7, 1003 566 3 8');
boxes('green', '1043 381 3 12, 1043 554 3 12, 1121 381 3 12, 1121 467 3 13, 1121 554 3 12, 1043 450 3 31, 1047 455 4 26, 1052 462 3 19');
boxes('green', '1084 351 31 4, 1084 356 26 3, 1084 360 19 3, 1084 441 13 3, 1084 527 13 3, 1084 616 13 4');
boxes('green', '1028 634 6 2, 1056 634 8 2, 1103 634 7 2, 1133 634 6 2, 1080 640 7 3');
[378, 409, 465, 496, 552, 583].forEach(function (y) {
  var top = y == 465 ? 444 : y - 12;
  boxes('green', '1054 ' + top + ' 23 3, 1055 ' + (top + 5) + ' 23 3');
  path('gray', 'M1051 ' + (top + 4) + 'H1078L1083 ' + (y - 2) + 'M1078 ' + (y + 3) + 'L1098 ' + (y - 6));
  path('green', 'M1088 ' + (y - 5) + 'l8-4l2 3l-8 4z');
  path('white', 'M1081 ' + y + 'a2 2 0 0 1 4 0a2 2 0 0 1 -4 0');
  path('red', 'M1080 ' + y + 'h1M1083 ' + y + 'v0M1083 ' + (y - 3) + 'v1M1083 ' + (y + 3) + 'v1M1086 ' + y + 'h1');
});

// KZ1
hor('gray', '667 421 447, 682 423 444, 695 439 458, 745 426 458, 784 439 458, 699 412 419, 740 412 419, 781 412 419');
ver('gray', '423 680 685, 444 680 685, 439 695 739, 439 747 784, 414 699 781');
path('white', 'M420 688H433V686L435 690V688H448M423 688V740H403M444 688V740H465');
ver('red', '426 698 782, 431 698 782, 436 698 782, 441 698 782');
[701, 706, 710, 714, 718, 722, 726, 730, 734, 739, 747, 755, 763, 772].forEach(function (y) {
  hor('red', y + ' 426 439');
  hor('gray', y + ' 438 439');
});
boxes('green', '429 669 9 3, 431 678 5 3, 446 691 12 3, 447 741 9 3, 446 780 12 3, 415 724 4 5, 448 724 4 5, 410 715 3 8, 410 757 3 7');
hor('green', '733 413 421, 733 446 454');

// column section
boxes('green', '520 661 13 5, 522 670 9 3, 521 681 9 3, 505 696 3 5, 524 714 5 3, 543 694 12 3');
boxes('gray', '513 685 27 27');
lines('gray', '513 685 516 688, 540 685 537 688, 513 712 516 709, 540 712 537 709');
boxes('white', '516 688 21 21');
boxes('red', '518 690 17 17');
hor('gray', '667 519 534, 688 507 512, 709 507 512, 718 516 537, 698 535 555, 696 513 518, 701 513 518');
ver('gray', '509 688 709, 516 715 720, 537 715 720, 524 685 690, 529 685 690, 524 706 712, 529 706 712');

// KZ2
hor('gray', '667 606 638, 683 615 627, 703 616 639, 719 621 639, 689 603 609, 738 603 609');
path('white', 'M594 712H615V689H627V712H648');
ver('red', '617 691 738, 625 691 738');
hor('red', '691 617 625, 699 617 625, 707 617 625, 715 617 625');
ver('gray', '615 681 686, 627 681 686, 621 689 719, 605 689 738');
boxes('green', '618 669 9 3, 618 679 6 3, 631 699 7 3, 627 715 13 3, 601 698 3 5, 601 722 3 6');

// floor table
hor('gray', '667 711 760');
hor('white', '678 712 759, 686 712 759, 694 712 759, 703 712 759, 711 712 759, 719 712 759');
ver('white', '728 678 719, 743 678 719');
boxes('green', '719 681 2 2, 731 681 9 2, 716 689 9 3, 732 690 8 2, 748 690 6 2, 719 697 2 3, 731 697 9 3, 749 697 4 3, 720 705 0 3, 731 705 9 3, 748 705 6 3, 718 713 5 4, 731 713 10 4, 746 713 10 4');

// notes
boxes('green', '788 734 8 4, 796 742 94 5, 796 750 80 5, 796 758 145 6, 796 767 147 5, 796 775 56 5');
```
